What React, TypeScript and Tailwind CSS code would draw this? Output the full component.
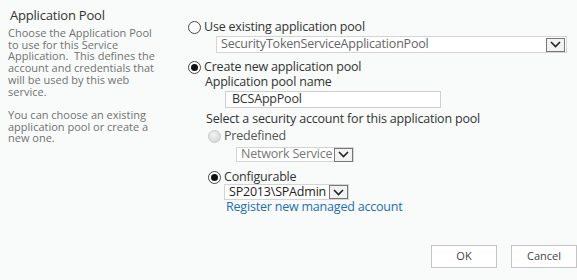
import React from "react";

function Radio({ checked, disabled }: { checked?: boolean; disabled?: boolean }) {
  if (disabled) {
    return (
      <span className="inline-block w-[13px] h-[13px] rounded-full border border-[#c8c8c8] bg-[radial-gradient(circle_at_40%_35%,#f4f4f4,#cfcfcf)] shrink-0" />
    );
  }
  return (
    <span className="inline-flex items-center justify-center w-[13px] h-[13px] rounded-full border border-[#444] bg-white shrink-0">
      {checked && <span className="block w-[7px] h-[7px] rounded-full bg-[#111]" />}
    </span>
  );
}

function Arrow() {
  return (
    <span className="flex items-center justify-center w-[19px] h-[14px] border border-[#777] bg-[#f2f2f2] shrink-0">
      <svg width="11" height="7" viewBox="0 0 11 7">
        <path d="M1 1 L5.5 5.5 L10 1" fill="none" stroke="#222" strokeWidth="1.6" />
      </svg>
    </span>
  );
}

function Select({ text, className, textClass }: { text: string; className: string; textClass: string }) {
  return (
    <div className={`flex items-center justify-between bg-white border border-[#d4d4d4] ${className}`}>
      <span className={`pl-[4px] leading-none whitespace-nowrap ${textClass}`}>{text}</span>
      <Arrow />
    </div>
  );
}

export default function App() {
  return (
    <div className="w-[577px] h-[280px] bg-[#f8fbfa] overflow-hidden font-['Open_Sans',sans-serif] text-[#333] flex flex-col">
      <div className="flex">
        <div className="w-[180px] shrink-0 pl-[8px] pt-[7px]">
          <div className="text-[13px] leading-[16px] text-[#333] pl-[2px] tracking-[-0.2px]">Application Pool</div>
          <p className="mt-[4px] text-[11px] leading-[11.7px] text-[#727272] whitespace-nowrap">
            Choose the Application Pool
            <br />
            to use for this Service
            <br />
            Application.&nbsp; This defines the
            <br />
            account and credentials that
            <br />
            will be used by this web
            <br />
            service.
            <br />
            <br />
            You can choose an existing
            <br />
            application pool or create a
            <br />
            new one.
          </p>
        </div>
        <div className="flex-1 pl-[8px] pt-[19px] text-[12.5px] tracking-[-0.2px] text-[#333]">
          <div className="flex items-center gap-[3px] h-[16px]">
            <Radio />
            <span className="leading-none">Use existing application pool</span>
          </div>
          <div className="pl-[28px] pt-[1px]">
            <Select text="SecurityTokenServiceApplicationPool" className="w-[351px] h-[17px] pr-[1px]" textClass="text-[#666]" />
          </div>
          <div className="flex items-center gap-[3px] h-[16px] mt-[6px]">
            <Radio checked />
            <span className="leading-none">Create new application pool</span>
          </div>
          <div className="pl-[17px] h-[14px] leading-[14px]">Application pool name</div>
          <div className="pl-[37px] pt-[2px]">
            <div className="w-[216px] h-[17px] bg-white border border-[#cfcfcf] flex items-center pl-[6px] leading-none">BCSAppPool</div>
          </div>
          <div className="pl-[18px] mt-[4px] h-[14px] leading-[14px]">Select a security account for this application pool</div>
          <div className="pl-[20px] mt-[3px] flex items-center gap-[3px] h-[14px]">
            <Radio disabled />
            <span className="leading-none text-[#555]">Predefined</span>
          </div>
          <div className="pl-[48px] pt-[4px]">
            <Select text="Network Service" className="w-[118px] h-[15px]" textClass="text-[#777]" />
          </div>
          <div className="pl-[20px] mt-[8px] flex items-center gap-[3px] h-[14px]">
            <Radio checked />
            <span className="leading-none">Configurable</span>
          </div>
          <div className="pl-[36px]">
            <Select text="SP2013\SPAdmin" className="w-[125px] h-[16px] border-[#b0b0b0]" textClass="text-[#222]" />
          </div>
          <div className="pl-[38px] h-[14px] leading-[14px] text-[#1c6eb6]">Register new managed account</div>
        </div>
      </div>
      <div className="flex justify-end gap-[14px] mt-[31px] pr-0">
        <button className="w-[66px] h-[23px] bg-white border border-[#c4c4c4] text-[11px] text-[#444]">OK</button>
        <button className="w-[66px] h-[23px] bg-white border border-[#c4c4c4] text-[11px] text-[#444]">Cancel</button>
      </div>
    </div>
  );
}
